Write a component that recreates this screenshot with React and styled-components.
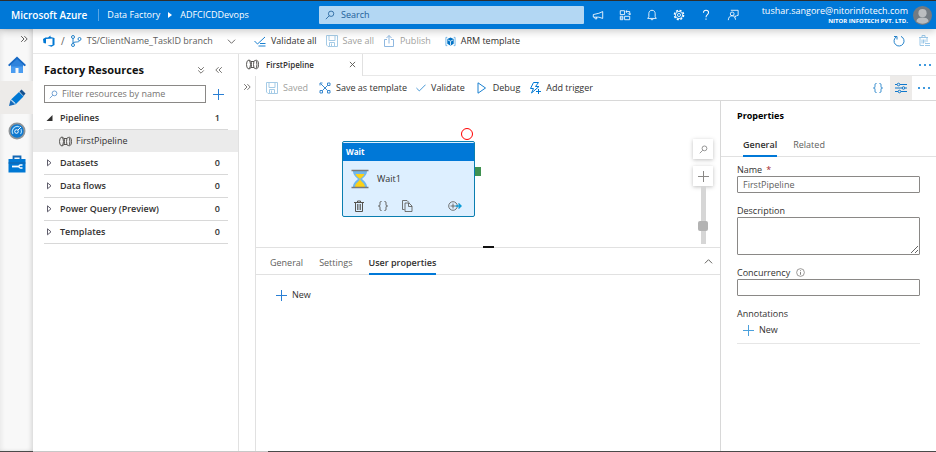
import React from "react"
import styled, { createGlobalStyle, css } from "styled-components"

const GlobalStyle = createGlobalStyle`
  * {
    box-sizing: border-box;
  }
  body {
    margin: 0;
    font-family: "Open Sans", "Noto Sans", sans-serif;
    font-size: 9px;
    line-height: 12px;
    color: #323130;
    background: #fff;
  }
  button, input, textarea {
    font: inherit;
    color: inherit;
    margin: 0;
  }
  h1, h2, ul {
    margin: 0;
    padding: 0;
    list-style: none;
  }
  a {
    color: inherit;
    text-decoration: none;
  }
`

const Icon = styled.svg.attrs({ "aria-hidden": true })`
  display: block;
  flex: none;
  width: ${p => p.$size || 12}px;
  height: ${p => p.$size || 12}px;
  fill: none;
  stroke: currentColor;
  stroke-width: 1;
  color: ${p => p.$color || "inherit"};
`

const Page = styled.div`
  display: flex;
  flex-direction: column;
  min-height: 100vh;
  border-top: 1px solid #323130;
`

/* header */

const Header = styled.header`
  display: flex;
  align-items: center;
  height: 28px;
  padding-right: 4px;
  color: #fff;
  background: #0078d7;
  box-shadow: 0 2px 8px rgba(0, 0, 0, 0.22);
  z-index: 1;
`

const Crumbs = styled.nav`
  display: flex;
  align-items: center;
  flex: 0 0 319px;
  padding-left: 11px;
  white-space: nowrap;
`

const Brand = styled.a`
  font-size: 10px;
  font-weight: 600;
  padding-right: 11px;
  margin-right: 8px;
  border-right: 1px solid #58a6e6;
`

const CrumbArrow = styled.span`
  width: 0;
  margin: 0 8px;
  border-left: 4px solid #fff;
  border-top: 3px solid transparent;
  border-bottom: 3px solid transparent;
`

const SearchBox = styled.label`
  display: flex;
  align-items: center;
  flex: 1;
  gap: 6px;
  height: 18px;
  padding: 0 4px 0 6px;
  border-radius: 1px;
  background: #b3d7f3;
  color: #22609a;
`

const BareInput = styled.input`
  flex: 1;
  min-width: 0;
  padding: 0;
  border: 0;
  outline: 0;
  background: transparent;
  &::placeholder {
    color: ${p => p.$hint || "#767472"};
    opacity: 1;
  }
`

const HeaderButton = styled.button`
  display: flex;
  align-items: center;
  justify-content: center;
  width: 27px;
  height: 28px;
  padding: 0;
  border: 0;
  color: #fff;
  background: transparent;
`

const Account = styled.div`
  width: 162px;
  margin-right: 5px;
  text-align: right;
  white-space: nowrap;
`

const Tenant = styled.div`
  font-size: 6px;
  line-height: 8px;
  font-weight: 700;
`

/* shell */

const Shell = styled.div`
  display: flex;
  flex: 1;
`

const Rail = styled.nav`
  display: flex;
  flex-direction: column;
  flex: 0 0 33px;
  background: #f8f8f8;
  box-shadow: inset -3px 0 4px -1px rgba(0, 0, 0, 0.12), inset 2px 0 4px rgba(0, 0, 0, 0.06);
`

const RailToggle = styled.button`
  display: flex;
  align-items: center;
  justify-content: flex-end;
  height: 19px;
  padding: 0 5px 0 0;
  border: 0;
  background: transparent;
`

const RailLink = styled.a`
  display: flex;
  align-items: center;
  justify-content: center;
  height: 33px;
  background: ${p => (p.$active ? "#edebe9" : "transparent")};
`

const Main = styled.div`
  display: flex;
  flex-direction: column;
  flex: 1;
  min-width: 0;
`

const GlobalBar = styled.div`
  display: flex;
  align-items: center;
  height: 25px;
  padding-left: 10px;
  border-bottom: 1px solid #e8e8e8;
`

const Branch = styled.button`
  display: flex;
  align-items: center;
  width: 193px;
  margin-right: 18px;
  padding: 0;
  border: 0;
  color: #605e5c;
  background: transparent;
  white-space: nowrap;
`

const Slash = styled.span`
  margin: 0 5px 0 6px;
  font-size: 10px;
`

const BranchName = styled.span`
  flex: 1;
  margin-left: 5px;
  text-align: left;
`

const Command = styled.button`
  display: flex;
  align-items: center;
  gap: 5px;
  padding: 0;
  margin-right: ${p => p.$after || 9}px;
  border: 0;
  background: transparent;
  white-space: nowrap;
  color: #323130;
  &:disabled {
    color: #a19f9d;
  }
`

const Spacer = styled.span`
  flex: 1;
`

const IconButton = styled.button`
  display: flex;
  align-items: center;
  justify-content: center;
  width: ${p => p.$w || 18}px;
  height: ${p => p.$h || 18}px;
  padding: 0;
  border: 0;
  color: #55534f;
  background: ${p => (p.$active ? "#edebe9" : "transparent")};
`

const Columns = styled.div`
  display: flex;
  flex: 1;
`

const StatusLine = styled.footer`
  height: 1px;
  padding-left: 33px;
  background: #4a4a4a;
  &::after {
    content: "";
    display: block;
    width: 235px;
    height: 1px;
    background: #c8c8c8;
  }
`

/* resource explorer */

const Explorer = styled.aside`
  flex: 0 0 206px;
  border-right: 1px solid #e1e1e1;
`

const ExplorerHead = styled.div`
  display: flex;
  align-items: center;
  height: 31px;
  padding: 0 10px 0 11px;
`

const ExplorerTitle = styled.h1`
  flex: 1;
  font-size: 11px;
  line-height: 16px;
  font-weight: 700;
  color: #111;
  white-space: nowrap;
`

const FilterRow = styled.div`
  display: flex;
  align-items: center;
  gap: 3px;
  padding: 0 11px;
`

const FilterBox = styled.label`
  display: flex;
  align-items: center;
  flex: 1;
  gap: 4px;
  height: 18px;
  padding: 0 4px;
  border: 1px solid #8a8886;
`

const Tree = styled.ul`
  padding-top: 4px;
`

const Group = styled.button`
  display: flex;
  align-items: center;
  width: calc(100% - 21px);
  height: 23px;
  margin: 0 10px 0 11px;
  padding: 0 8px 0 2px;
  border: 0;
  border-bottom: 1px solid #d8d8d8;
  background: transparent;
  font-weight: 600;
`

const GroupName = styled.span`
  flex: 1;
  margin-left: 6px;
  text-align: left;
`

const Leaf = styled.a`
  display: flex;
  align-items: center;
  gap: 4px;
  height: 22px;
  padding-left: 26px;
  background: #ebebeb;
`

/* editor */

const Editor = styled.main`
  display: flex;
  flex-direction: column;
  flex: 1;
  min-width: 0;
`

const TabStrip = styled.div`
  display: flex;
  align-items: center;
  justify-content: space-between;
  height: 22px;
  padding-right: 2px;
  border-bottom: 1px solid #e8e8e8;
`

const FileTab = styled.div`
  display: flex;
  align-items: center;
  width: 124px;
  height: 22px;
  padding: 0 1px 0 7px;
  border-right: 1px solid #e1e1e1;
  gap: 7px;
  background: #fff;
  font-size: 8px;
  font-weight: 600;
`

const EditorBody = styled.div`
  display: flex;
  flex: 1;
`

const Gutter = styled.div`
  flex: 0 0 17px;
  padding-top: 2px;
  border-right: 1px solid #e1e1e1;
`

const Work = styled.div`
  display: flex;
  flex-direction: column;
  flex: 1;
  min-width: 0;
`

const Toolbar = styled.div`
  display: flex;
  align-items: center;
  height: 25px;
  padding: 0 1px 0 10px;
  border-bottom: 1px solid #d8d8d8;
`

const Split = styled.div`
  display: flex;
  flex: 1;
`

const Stage = styled.section`
  display: flex;
  flex-direction: column;
  flex: 1;
  min-width: 0;
`

const Canvas = styled.div`
  position: relative;
  display: flex;
  justify-content: flex-end;
  height: 146px;
  padding: 38px 7px 0 0;
`

const Node = styled.article`
  position: absolute;
  left: 86px;
  top: 40px;
  width: 133px;
  height: 76px;
  border: 1px solid #0a7eb0;
  border-radius: 2px;
  background: #ddefff;
`

const NodeType = styled.div`
  height: 18px;
  margin-top: 1px;
  padding: 3px;
  color: #fff;
  font-size: 8px;
  line-height: 12px;
  font-weight: 700;
  background: #0078d7;
`

const NodeBody = styled.div`
  display: flex;
  align-items: center;
  gap: 7px;
  height: 36px;
  padding-left: 7px;
`

const NodeActions = styled.div`
  display: flex;
  align-items: center;
  gap: 6px;
  height: 18px;
  padding: 0 10px 0 7px;
`

const Breakpoint = styled.span`
  position: absolute;
  left: 205px;
  top: 27px;
  width: 12px;
  height: 12px;
  border: 1px solid #f00;
  border-radius: 50%;
`

const OutPort = styled.span`
  position: absolute;
  left: 219px;
  top: 66px;
  width: 6px;
  height: 9px;
  background: #3f9150;
`

const ZoomControls = styled.div`
  display: flex;
  flex-direction: column;
  align-items: center;
  width: 20px;
`

const ZoomButton = styled(IconButton)`
  width: 20px;
  height: 20px;
  margin-bottom: ${p => p.$after || 0}px;
  background: #fff;
  box-shadow: 0 1px 4px rgba(0, 0, 0, 0.25);
`

const ZoomSlider = styled.input`
  appearance: none;
  writing-mode: vertical-lr;
  direction: rtl;
  width: 10px;
  height: 58px;
  background: linear-gradient(to right, transparent 3px, #d6d6d6 3px, #d6d6d6 8px, transparent 8px);
  &::-webkit-slider-thumb {
    appearance: none;
    width: 10px;
    height: 10px;
    border-radius: 2px;
    background: #b3b3b3;
  }
`

const Splitter = styled.div`
  display: flex;
  justify-content: center;
  height: 1px;
  background: #e1e1e1;
  &::after {
    content: "";
    width: 11px;
    height: 2px;
    margin-top: -1px;
    background: #111;
  }
`

const Tabs = styled.div`
  display: flex;
  gap: ${p => p.$gap}px;
  height: ${p => p.$h}px;
  padding: ${p => p.$pad};
  border-bottom: 1px solid #e1e1e1;
`

const Tab = styled.button`
  padding: 0;
  margin-bottom: -1px;
  border: 0;
  border-bottom: 2px solid transparent;
  background: transparent;
  color: #605e5c;
  white-space: nowrap;
  ${p =>
    p.$active &&
    css`
      border-color: #0078d7;
      color: #323130;
      font-weight: 600;
    `}
`

const NewRow = styled.div`
  padding: ${p => p.$pad};
`

/* properties */

const Properties = styled.aside`
  flex: 0 0 216px;
  border-left: 1px solid #d8d8d8;
`

const PropertiesTitle = styled.h2`
  padding: 9px 16px 0;
  font-size: 9px;
  line-height: 12px;
  font-weight: 700;
  color: #000;
`

const Form = styled.form`
  display: flex;
  flex-direction: column;
  padding: 6px 16px 0;
`

const Field = styled.label`
  display: flex;
  align-items: center;
  gap: ${p => p.$gap || 4}px;
  height: 13px;
`

const Required = styled.span`
  color: #a4262c;
`

const fieldBox = css`
  width: 100%;
  margin-bottom: 11px;
  padding: 0 5px;
  border: 1px solid #8a8886;
  border-radius: 1px;
  color: #605e5c;
  background: #fff;
`

const TextField = styled.input`
  ${fieldBox}
  height: 17px;
`

const TextBox = styled.textarea`
  ${fieldBox}
  display: block;
  height: 38px;
  resize: vertical;
`

const Annotations = styled.div`
  padding: 4px 0 7px 6px;
  border-bottom: 1px solid #e6e6e6;
`

/* drawings */

const Magnifier = ({ size = 10, color }) => (
  <Icon viewBox="0 0 12 12" $size={size} $color={color}>
    <circle cx="7.3" cy="4.5" r="3.2" />
    <path d="M5 7 1 11" />
  </Icon>
)

const Plus = ({ color = "#2a7fd4", size = 11 }) => (
  <Icon viewBox="0 0 11 11" $size={size} $color={color}>
    <path d="M5.5 0v11M0 5.5h11" />
  </Icon>
)

const DoubleChevron = ({ turn = 0 }) => (
  <Icon viewBox="0 0 10 10" $size={8}>
    <path d="m1.5 1.5 3.5 3.5-3.5 3.5M5.5 1.5 9 5 5.5 8.5" transform={`rotate(${turn} 5 5)`} />
  </Icon>
)

const PipelineIcon = ({ size = 13 }) => (
  <Icon viewBox="0 0 13 12" $size={size} $color="#484644">
    <ellipse cx="2.5" cy="6" rx="2" ry="4.2" strokeWidth=".9" />
    <path d="M2.5 1.8h1.300c1.200.5 1.700 2 1.700 4.200s-.5 3.700-1.700 4.200H2.500M5 3h3M5 9h3M10 1.800h.8c1.200.5 1.700 2 1.700 4.200s-.5 3.700-1.700 4.200H10" strokeWidth=".9" />
    <ellipse cx="9.200" cy="6" rx="1.700" ry="4.200" strokeWidth=".9" />
  </Icon>
)

const Braces = ({ size = 12, color }) => (
  <Icon viewBox="0 0 12 12" $size={size} $color={color}>
    <path d="M4.500 1.500C3 1.500 3 2 3 3.500S3 6 1.500 6C3 6 3 7 3 8.500s0 2 1.500 2M7.500 1.500C9 1.500 9 2 9 3.500S9 6 10.500 6C9 6 9 7 9 8.500s0 2-1.500 2" />
  </Icon>
)

const SaveIcon = () => (
  <Icon viewBox="0 0 12 12" $color="#a5cbe6">
    <path d="M.5.5h11v11H2l-1.500-1.500zM3 .5v5h6v-5M3.500 11.500v-4h5v4M5.500 8.500v3" />
  </Icon>
)

const Dots = () => (
  <Icon viewBox="0 0 12 12" $color="#0078d4">
    <path d="M0 6h2M5 6h2M10 6h2" strokeWidth="1.500" />
  </Icon>
)

const headerIcons = [
  ["Announcements", <path key="a" d="M12.500 3v8L8 9.500H1.500v-3L8 5zM3 9.500l.7 2h2l-.5-2" />],
  ["Switch directory", <path key="s" d="M1.500 2h5v4.500h-5zM1.500 8.500h3v4h-3zM6.500 8.500h6v4h-6zM8 3h4.500v3.500M10.500 5l2 2 1.500-2M9.500 1.500 8 3l1.500 1.500M1.500 10.500h3" />],
  ["Notifications", <path key="n" d="M7 1.500c-2.500 0-3.700 1.800-3.700 4V9L2 11h10l-1.300-2V5.500c0-2.200-1.200-4-3.700-4zM5.500 11.500c.3 1.500 2.700 1.500 3 0" />],
  ["Settings", <g key="g"><circle cx="7" cy="7" r="5.300" strokeWidth="1.800" strokeDasharray="2.400 1.760" /><circle cx="7" cy="7" r="4.200" /><circle cx="7" cy="7" r="1.800" /></g>],
  ["Help", <path key="h" d="M4 4.500C4 2.300 5.300 1.500 7 1.500s3 1 3 2.700C10 6.500 7 6.500 7 9.500M7 11v1.600" strokeWidth="1.200" />],
  ["Feedback", <path key="f" d="M4.500 1.500h8.500v6h-1.500l-2 2V7.500M6 3.500a2.200 2.200 0 1 0 .1 4.400A2.200 2.200 0 0 0 6 3.500zM1.500 13c.3-3.500 2-5.100 4.500-5.100 2 0 3.700 1.600 4 4.600" />],
]

const Avatar = () => (
  <Icon viewBox="0 0 20 20" $size={19}>
    <circle cx="10" cy="10" r="10" fill="#747b82" stroke="none" />
    <circle cx="10" cy="7.500" r="4.300" fill="#babdc0" stroke="none" />
    <path d="M3.500 16c.5-3 3-4 6.500-4s6 1 6.500 4c-3 3.500-10 3.500-13 0z" fill="#babdc0" stroke="none" />
  </Icon>
)

const groups = [
  ["Datasets", 0],
  ["Data flows", 0],
  ["Power Query (Preview)", 0],
  ["Templates", 0],
]

const TopHeader = () => (
  <Header>
    <Crumbs>
      <Brand href="#">Microsoft Azure</Brand>
      <a href="#">Data Factory</a>
      <CrumbArrow />
      <a href="#">ADFCICDDevops</a>
    </Crumbs>
    <SearchBox>
      <Magnifier />
      <BareInput aria-label="Search" placeholder="Search" $hint="#22609a" />
    </SearchBox>
    {headerIcons.map(([name, drawing]) => (
      <HeaderButton key={name} aria-label={name}>
        <Icon viewBox="0 0 14 14">{drawing}</Icon>
      </HeaderButton>
    ))}
    <Account>
      tushar.sangore@nitorinfotech.com
      <Tenant>NITOR INFOTECH PVT. LTD.</Tenant>
    </Account>
    <Avatar />
  </Header>
)

const SideRail = () => (
  <Rail>
    <RailToggle aria-label="Expand"><DoubleChevron /></RailToggle>
    <RailLink href="#" aria-label="Home">
      <Icon viewBox="0 0 18 18" $size={18}>
        <path d="M3 8h12v9h-4.500v-5h-3v5H3z" fill="#4a9cf0" stroke="none" />
        <path d="M9 .5 18 9l-1.300 1.200L9 5l-7.700 5.200L0 9z" fill="#1769c4" stroke="none" />
        <path d="M9 3 3 8.500v2h12v-2z" fill="#2f83dc" stroke="none" />
      </Icon>
    </RailLink>
    <RailLink href="#" aria-label="Author" $active>
      <Icon viewBox="0 0 18 18" $size={18}>
        <path d="m1 17 1.500-6 4.500 4.500z" fill="#1669b8" stroke="none" />
        <path d="M3 10.500 11 3l4.500 4.500-8 8z" fill="#0078d4" stroke="none" />
        <path d="m11.500 2.500 2-2 4 4-2 2.500z" fill="#14508f" stroke="none" />
        <path d="m3.500 11 4 3.500" stroke="#b7dcfa" />
      </Icon>
    </RailLink>
    <RailLink href="#" aria-label="Monitor">
      <Icon viewBox="0 0 18 18" $size={18}>
        <circle cx="9" cy="9" r="7.600" fill="#0f79d0" stroke="#8f9498" strokeWidth="1.800" />
        <path d="M5 12a5 5 0 0 1 6.500-7M13 7a5 5 0 0 1-.5 5" stroke="#a9dcfb" strokeWidth="1.200" />
        <circle cx="8.500" cy="9.500" r="1.800" stroke="#fff" />
        <path d="m10 8 3-3" stroke="#fff" />
      </Icon>
    </RailLink>
    <RailLink href="#" aria-label="Manage">
      <Icon viewBox="0 0 18 18" $size={18}>
        <path d="M5.500 4V1.500h7V4" stroke="#1267b4" strokeWidth="1.800" />
        <path d="M.5 4h17v13.500H.5z" fill="#0078d4" stroke="none" />
        <path d="M.5 8h17" stroke="#1760a7" />
        <path d="M4 11.500h7" stroke="#fff" strokeWidth="1.800" />
        <path d="M14.500 10h-2a1.500 1.500 0 0 0 0 3h2" stroke="#fff" strokeWidth="1.300" />
      </Icon>
    </RailLink>
  </Rail>
)

const FactoryBar = () => (
  <GlobalBar>
    <Branch>
      <Icon viewBox="0 0 12 12" $color="#0078d4">
        <path d="M0 4 2.500 2.500h2.500L7.500.5V2L11.500 3v7l-3 1.700L4.500 10.500 9.500 10V3.500L3 4v4.500L.5 8z" fill="currentColor" stroke="none" />
      </Icon>
      <Slash>/</Slash>
      <Icon viewBox="0 0 12 12" $color="#2684cc">
        <circle cx="3" cy="2" r="1.500" /><circle cx="3" cy="10" r="1.500" /><circle cx="9.500" cy="4" r="1.500" />
        <path d="M3 3.500v5M9.500 5.500C9.500 8 3 6 3 8.500" />
      </Icon>
      <BranchName>TS/ClientName_TaskID branch</BranchName>
      <Icon viewBox="0 0 10 10" $size={9}><path d="m1 3 4 4 4-4" /></Icon>
    </Branch>
    <Command>
      <Icon viewBox="0 0 12 12" $color="#1a80d0"><path d="m.5 6 3 3 7.500-7M6 8.500h5.500M4.500 11h7" /></Icon>
      Validate all
    </Command>
    <Command disabled><SaveIcon />Save all</Command>
    <Command disabled $after={14}>
      <Icon viewBox="0 0 12 12" $color="#8fb8e0"><path d="M4 4.500H1.500v7h9v-7H8M6 8.500v-8M3.500 3 6 .5 8.500 3" /></Icon>
      Publish
    </Command>
    <Command>
      <Icon viewBox="0 0 12 12" $size={11}>
        <path d="M2.500 1.500H1v9h1.500M9.500 1.500H11v9H9.500" stroke="#6ab1e6" />
        <path d="m6 1.500 3.500 1.700v5.200L6 10.500 2.500 8.400V3.200z" fill="#0072c6" stroke="none" />
        <path d="M3 4.200 6 5.700l3-1.500M6 5.700v4.500" stroke="#d4ebfa" />
      </Icon>
      ARM template
    </Command>
    <Spacer />
    <IconButton $w={26} aria-label="Refresh">
      <Icon viewBox="0 0 12 12" $color="#2684cc"><path d="M8 1.400A5 5 0 1 1 3.500 1.700M1 1.500h3v3" /></Icon>
    </IconButton>
    <IconButton $w={24} aria-label="Discard all">
      <Icon viewBox="0 0 12 12" $color="#9cc8e8"><path d="M1 2.500h9M4 2V.5h3V2M2 3v7.500h4M9 3v4M4 4.500v4M5.500 4.500v4M7 4.500v3M7 8.500h5M7 10.500h5" /></Icon>
    </IconButton>
  </GlobalBar>
)

const ResourceExplorer = () => (
  <Explorer>
    <ExplorerHead>
      <ExplorerTitle>Factory Resources</ExplorerTitle>
      <IconButton aria-label="Collapse all"><DoubleChevron turn={90} /></IconButton>
      <IconButton aria-label="Hide explorer"><DoubleChevron turn={180} /></IconButton>
    </ExplorerHead>
    <FilterRow>
      <FilterBox>
        <Magnifier size={9} color="#4a86c5" />
        <BareInput aria-label="Filter resources by name" placeholder="Filter resources by name" />
      </FilterBox>
      <IconButton aria-label="Add resource"><Plus /></IconButton>
    </FilterRow>
    <Tree>
      <li>
        <Group aria-expanded="true">
          <Icon viewBox="0 0 8 8" $size={8}><path d="M6.500 1v6h-6z" fill="#323130" stroke="none" /></Icon>
          <GroupName>Pipelines</GroupName>1
        </Group>
        <Leaf href="#"><PipelineIcon />FirstPipeline</Leaf>
      </li>
      {groups.map(([name, count]) => (
        <li key={name}>
          <Group aria-expanded="false">
            <Icon viewBox="0 0 8 8" $size={8} $color="#605e6c"><path d="M1.500.8v6L5 3.800z" /></Icon>
            <GroupName>{name}</GroupName>{count}
          </Group>
        </li>
      ))}
    </Tree>
  </Explorer>
)

const PipelineToolbar = () => (
  <Toolbar>
    <Command disabled $after={11}><SaveIcon />Saved</Command>
    <Command>
      <Icon viewBox="0 0 12 12" $color="#3a89cf">
        <path d="M1 3.500V1h2.500M8.500 1H11v2.500H8.500zM1 8.500h2.500V11H1zM8.500 8.500H11V11H8.500zM1.500 1.500l7 7M8.500 3.500l-5 5" />
      </Icon>
      Save as template
    </Command>
    <Command $after={11}>
      <Icon viewBox="0 0 12 12" $size={10} $color="#2684cc"><path d="m.5 6 3.500 3.500L11.500 2" /></Icon>
      Validate
    </Command>
    <Command>
      <Icon viewBox="0 0 12 12" $color="#1a80d0"><path d="M2 .8v10.400L9.500 6z" /></Icon>
      Debug
    </Command>
    <Command>
      <Icon viewBox="0 0 12 12" $color="#0078d4"><path d="M4.500.5h5L6.500 4.500H10L2.500 11l2-4.500h-3zM9.500 7v5M7 9.500h5" /></Icon>
      Add trigger
    </Command>
    <Spacer />
    <IconButton $w={24} aria-label="Code"><Braces color="#2684cc" /></IconButton>
    <IconButton $w={22} $h={24} $active aria-label="Properties">
      <Icon viewBox="0 0 12 12" $color="#0f78cc">
        <path d="M0 2.500h2M5 2.500h7M0 6h7M10 6h2M0 9.500h3M6 9.500h6" />
        <circle cx="3.500" cy="2.500" r="1.300" /><circle cx="8.500" cy="6" r="1.300" /><circle cx="4.500" cy="9.500" r="1.300" />
      </Icon>
    </IconButton>
    <IconButton $w={23} aria-label="More actions"><Dots /></IconButton>
  </Toolbar>
)

const PipelineCanvas = () => (
  <Canvas>
    <Breakpoint />
    <OutPort />
    <Node>
      <NodeType>Wait</NodeType>
      <NodeBody>
        <Icon viewBox="0 0 20 20" $size={20}>
          <path d="M3 2h14c0 4-3 6-5 8 2 2 5 4 5 8H3c0-4 3-6 5-8-2-2-5-4-5-8z" fill="#6fb7ec" stroke="none" />
          <path d="M5.500 5h9c-1 2.500-3 3.500-4.500 5-1.500-1.500-3.500-2.500-4.500-5zM10 9c0 4-4.500 4-5 9h10c-.5-5-5-5-5-9z" fill="#fdd116" stroke="none" />
          <path d="M1.500 1.500h17M1.500 18.500h17" stroke="#77797b" strokeWidth="1.600" />
        </Icon>
        Wait1
      </NodeBody>
      <NodeActions>
        <IconButton aria-label="Delete">
          <Icon viewBox="0 0 12 12"><path d="M1 2.500h10M4.500 2.500V1h3v1.500M2.500 3v8.500h7V3" /><path d="M4.500 4v6M6 4v6M7.500 4v6" strokeWidth=".8" /></Icon>
        </IconButton>
        <IconButton aria-label="Code"><Braces /></IconButton>
        <IconButton aria-label="Copy">
          <Icon viewBox="0 0 12 12"><path d="M3.500 9.500h-2v-9H6l2 2M4 3h4l3 3v5.500H4zM7.500 3v3.500H11" strokeWidth=".8" /></Icon>
        </IconButton>
        <Spacer />
        <IconButton aria-label="Add output">
          <Icon viewBox="0 0 14 14" $size={14}>
            <circle cx="5" cy="7" r="4.300" strokeWidth=".8" />
            <path d="M5 4.500v5M2.500 7h5" strokeWidth=".8" />
            <path d="M7.500 7H13M10.500 4.500 13 7l-2.500 2.500" stroke="#0a9bd6" strokeWidth="1.400" />
          </Icon>
        </IconButton>
      </NodeActions>
    </Node>
    <ZoomControls>
      <ZoomButton $after={7} aria-label="Search canvas"><Magnifier size={9} color="#767676" /></ZoomButton>
      <ZoomButton aria-label="Zoom in"><Plus color="#8a8886" /></ZoomButton>
      <ZoomSlider type="range" aria-label="Zoom" min="0" max="100" defaultValue="27" />
    </ZoomControls>
  </Canvas>
)

const PropertiesPane = () => (
  <Properties>
    <PropertiesTitle>Properties</PropertiesTitle>
    <Tabs $gap={16} $h={35} $pad="13px 22px 0">
      <Tab $active>General</Tab>
      <Tab>Related</Tab>
    </Tabs>
    <Form>
      <Field htmlFor="name">Name <Required>*</Required></Field>
      <TextField id="name" defaultValue="FirstPipeline" />
      <Field htmlFor="description">Description</Field>
      <TextBox id="description" />
      <Field htmlFor="concurrency" $gap={6}>
        Concurrency
        <Icon viewBox="0 0 10 10" $size={9} $color="#767472"><circle cx="5" cy="5" r="4.300" strokeWidth=".8" /><path d="M5 4.500v3M5 2.500v1" /></Icon>
      </Field>
      <TextField id="concurrency" />
      <Field as="div">Annotations</Field>
      <Annotations>
        <Command type="button"><Plus color="#4ba0dc" />New</Command>
      </Annotations>
    </Form>
  </Properties>
)

const App = () => (
  <Page>
    <GlobalStyle />
    <TopHeader />
    <Shell>
      <SideRail />
      <Main>
        <FactoryBar />
        <Columns>
          <ResourceExplorer />
          <Editor>
            <TabStrip>
              <FileTab>
                <PipelineIcon />
                FirstPipeline
                <Spacer />
                <IconButton aria-label="Close tab">
                  <Icon viewBox="0 0 8 8" $size={7}><path d="m1 1 6 6M7 1 1 7" /></Icon>
                </IconButton>
              </FileTab>
              <IconButton aria-label="More tabs"><Dots /></IconButton>
            </TabStrip>
            <EditorBody>
              <Gutter>
                <IconButton $w={16} aria-label="Show activities"><DoubleChevron /></IconButton>
              </Gutter>
              <Work>
                <PipelineToolbar />
                <Split>
                  <Stage>
                    <PipelineCanvas />
                    <Splitter />
                    <Tabs $gap={16} $h={27} $pad="4px 3px 0 14px">
                      <Tab>General</Tab>
                      <Tab>Settings</Tab>
                      <Tab $active>User properties</Tab>
                      <Spacer />
                      <IconButton aria-label="Collapse panel">
                        <Icon viewBox="0 0 10 10" $size={9}><path d="m1 7 4-4 4 4" /></Icon>
                      </IconButton>
                    </Tabs>
                    <NewRow $pad="14px 20px">
                      <Command><Plus />New</Command>
                    </NewRow>
                  </Stage>
                  <PropertiesPane />
                </Split>
              </Work>
            </EditorBody>
          </Editor>
        </Columns>
      </Main>
    </Shell>
    <StatusLine />
  </Page>
)

export default App
